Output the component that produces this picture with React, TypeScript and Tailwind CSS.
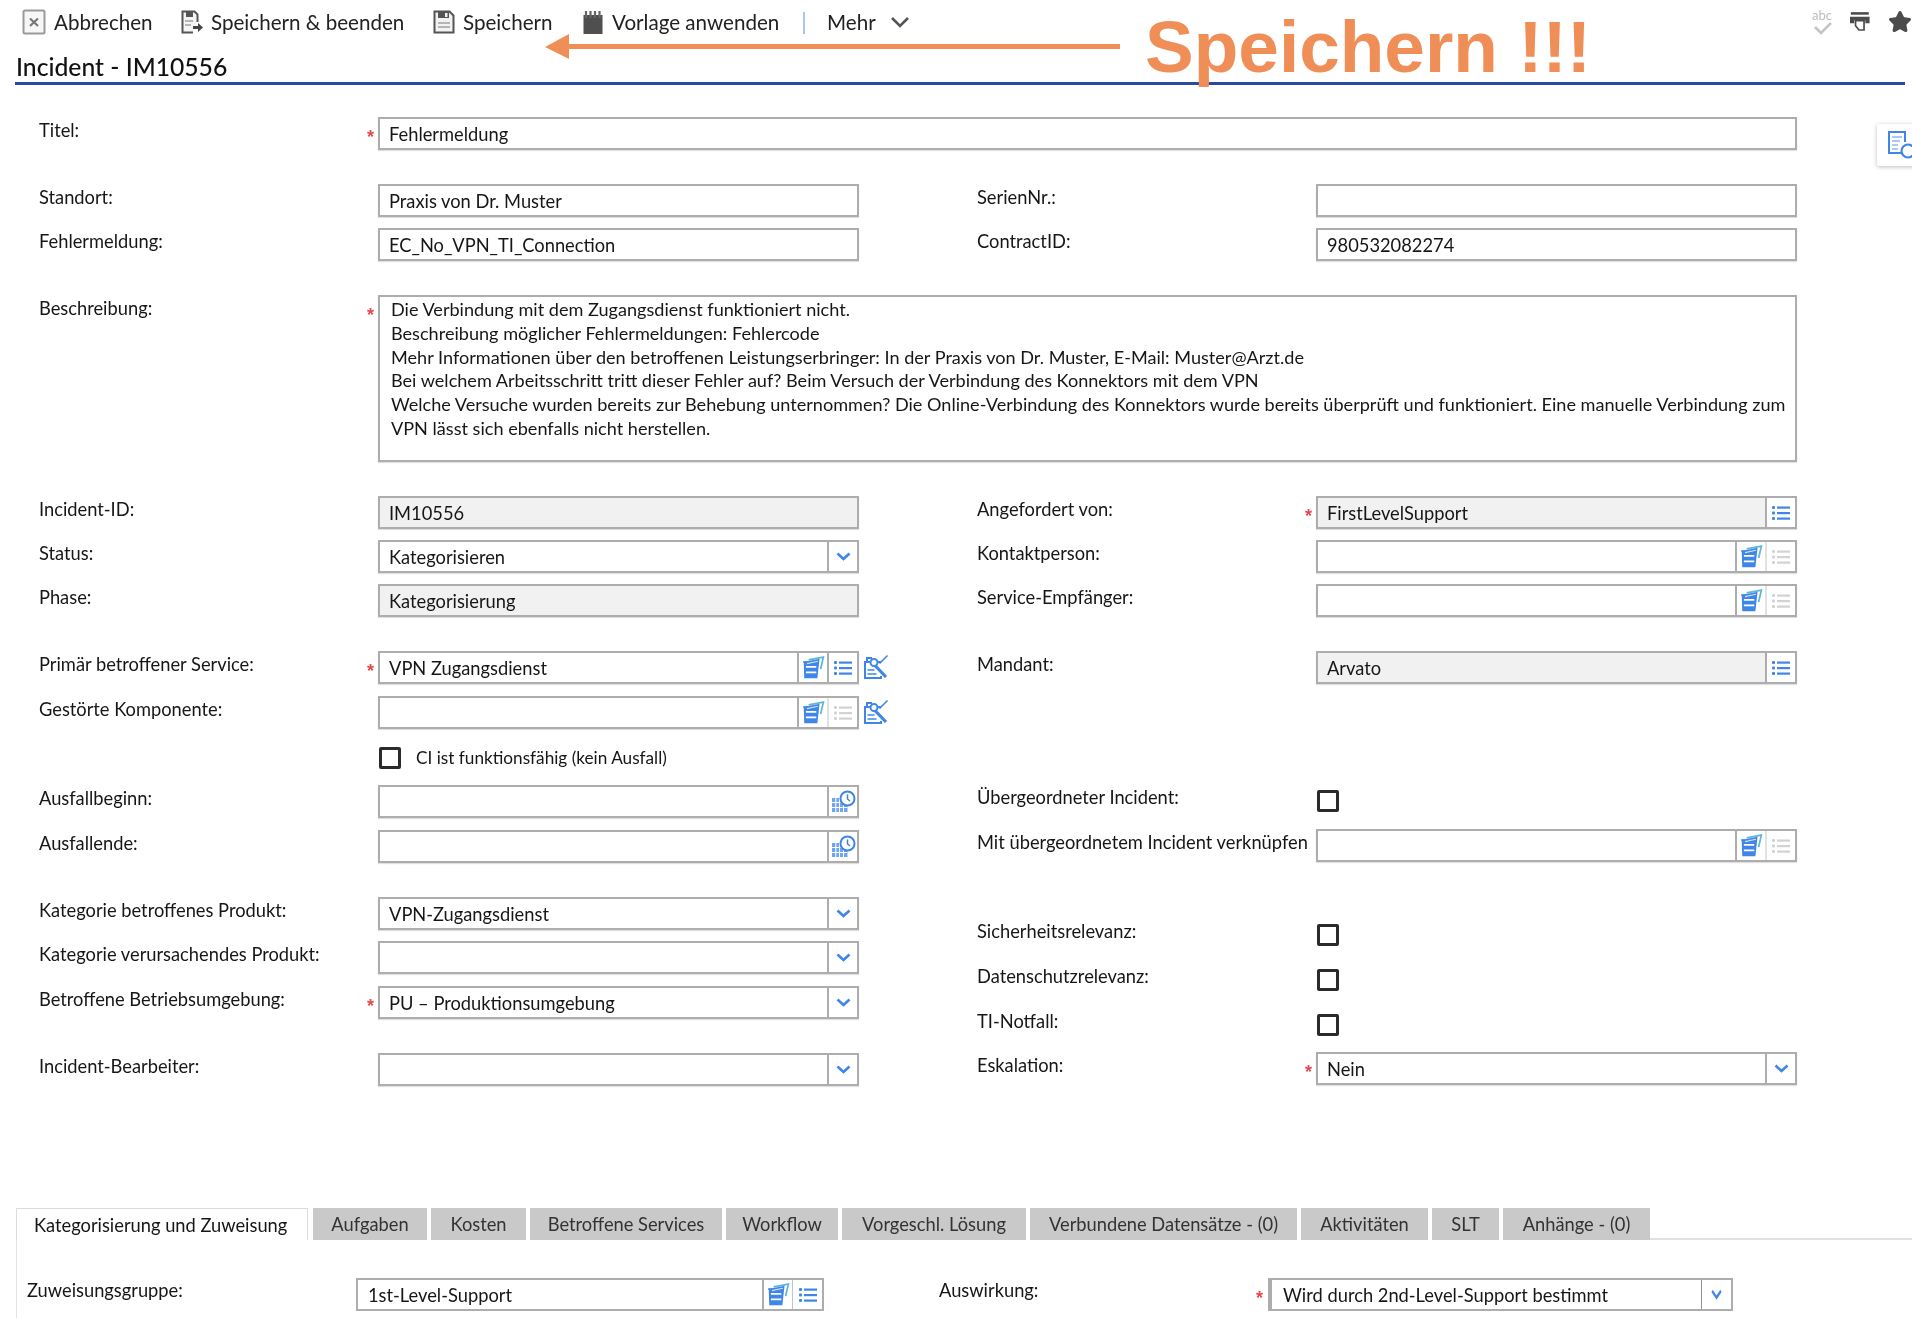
import type { ReactNode } from "react";
import { Star } from "lucide-react";

const BLUE = "#3f86e8";

function ListIcon({ muted = false }: { muted?: boolean }) {
  const c = muted ? "#d2d2d2" : BLUE;
  return (
    <svg width="18" height="16" viewBox="0 0 18 16" fill={c}>
      <rect x="0" y="1" width="3" height="3" rx="1" />
      <rect x="0" y="6.5" width="3" height="3" rx="1" />
      <rect x="0" y="12" width="3" height="3" rx="1" />
      <rect x="5" y="1.5" width="13" height="2.2" />
      <rect x="5" y="7" width="13" height="2.2" />
      <rect x="5" y="12.5" width="13" height="2.2" />
    </svg>
  );
}

function StackIcon() {
  return (
    <svg width="24" height="24" viewBox="0 0 22 22" fill="none">
      <path d="M7 3.500 20.500 1 18 12" stroke="#5fb7d8" strokeWidth="1.600" />
      <path d="M2.500 5.500 17 2.500 15 20.500H3z" fill={BLUE} />
      <path d="M2 5.500h14.500" stroke={BLUE} strokeWidth="1.500" />
      <path d="M4.500 10h9.500M4.500 15h9.500" stroke="#fff" strokeWidth="1.600" />
      <path d="M5.500 7 15.500 4.800" stroke="#cfe2fa" strokeWidth="1" />
    </svg>
  );
}

function EditIcon() {
  return (
    <svg width="26" height="26" viewBox="0 0 26 26" fill="none" stroke={BLUE} strokeWidth="2">
      <path d="M17 9.500V8H2v16h16v-2" />
      <path d="M4 8V4h5" />
      <circle cx="11" cy="8.500" r="3.500" fill="#fff" />
      <path d="M12 11.500 23 23" strokeWidth="3.200" />
      <path d="M17 9 24.500 1.500" strokeWidth="1.600" />
      <path d="M4.500 16h7M4.500 20h9" strokeWidth="1.600" />
    </svg>
  );
}

function CalClockIcon() {
  return (
    <svg width="25" height="23" viewBox="0 0 25 23" fill="none">
      <path d="M1 8h7.500v14H1zM8.500 13h8v9h-8z" fill="#6ea5ee" />
      <path d="M1 12.500h15.500M1 17.500h15.500M4.800 8v14M8.500 8v14M12.500 13v9" stroke="#fff" strokeWidth="1.100" />
      <circle cx="16.500" cy="8.500" r="7" fill="#fff" stroke={BLUE} strokeWidth="2" />
      <path d="M16.500 4.500v4.500l2.500 2" stroke="#4a7fc4" strokeWidth="1.500" />
    </svg>
  );
}

function Chevron({ small = false }: { small?: boolean }) {
  return (
    <svg width={small ? 11 : 15} height={small ? 11 : 9} viewBox="0 0 15 9" fill="none" preserveAspectRatio="none">
      <path d="M1.500 1.500 7.500 7l6-5.500" stroke={BLUE} strokeWidth="2.600" />
    </svg>
  );
}

function CancelIcon() {
  return (
    <svg width="24" height="26" viewBox="0 0 24 26" fill="none">
      <rect x="1.500" y="1.500" width="21" height="23" rx="1.500" fill="#f7f7f7" stroke="#9a9a9a" strokeWidth="2" />
      <path d="M8 9.500 16 17M16 9.500 8 17" stroke="#777" strokeWidth="2.200" />
    </svg>
  );
}

function SaveExitIcon() {
  return (
    <svg width="23" height="24" viewBox="0 0 23 24" fill="none">
      <path d="M12 22.500H1.500v-21h12l3 3V12" fill="#f4f4f4" stroke="#555" strokeWidth="2" />
      <path d="M5 2h7v5H5z" fill="#555" />
      <path d="M4 11h8M4 15h6" stroke="#b5b5b5" strokeWidth="2" />
      <path d="M12 17.500h6" stroke="#444" strokeWidth="3" />
      <path d="M17 13l5 4.500-5 4.500z" fill="#444" />
    </svg>
  );
}

function SaveIcon() {
  return (
    <svg width="22" height="24" viewBox="0 0 22 24" fill="none">
      <path d="M1.500 1.500h15l4 4v17h-19z" fill="#f2f2f2" stroke="#555" strokeWidth="2" />
      <path d="M5 2h11v6H5z" fill="#555" />
      <path d="M12 3h2.500v4H12z" fill="#f2f2f2" />
      <path d="M5 13h12M5 17h12" stroke="#b5b5b5" strokeWidth="2" />
    </svg>
  );
}

function TemplateIcon() {
  return (
    <svg width="20" height="25" viewBox="0 0 20 25" fill="none">
      <rect x="0.500" y="5" width="19" height="19" fill="#4f4f4f" />
      <path d="M3 1v7M7.500 1v7M12 1v7M16.500 1v7" stroke="#666" strokeWidth="2.200" />
    </svg>
  );
}

function SpellIcon() {
  return (
    <span className="relative block h-[26px] w-[24px]">
      <span className="absolute left-[0px] top-[-2px] text-[13px] leading-[16px] text-[#bdbdbd]">abc</span>
      <svg className="absolute left-[1px] top-[12px]" width="20" height="14" viewBox="0 0 20 14" fill="none">
        <path d="M2 6l6 6L18 2" stroke="#c4c4c4" strokeWidth="2.600" />
      </svg>
    </span>
  );
}

function PrintIcon() {
  return (
    <svg width="23" height="23" viewBox="0 0 23 23" fill="none">
      <path d="M1 0.500h21v3H1z" fill="#4c4c4c" />
      <path d="M0 6h23v7.500h-5V10H5v3.500H0z" fill="#4c4c4c" />
      <path d="M6.500 10.500h10v11h-6l-4-5z" fill="#fff" stroke="#4c4c4c" strokeWidth="2" />
    </svg>
  );
}

function PreviewIcon() {
  return (
    <svg width="30" height="30" viewBox="0 0 30 30" fill="none">
      <path d="M14 23H2V2h16v10" fill="#fff" stroke={BLUE} strokeWidth="2" />
      <path d="M5 7h10M5 11h8M5 15h6M5 19h6" stroke="#8db8f0" strokeWidth="1.600" />
      <circle cx="21" cy="21" r="6.500" fill="#fff" stroke={BLUE} strokeWidth="2.200" />
    </svg>
  );
}

function ToolbarItem({ icon, label, className }: { icon: ReactNode; label: string; className: string }) {
  return (
    <div className={`flex items-center ${className}`}>
      {icon}
      <span>{label}</span>
    </div>
  );
}

type Seg = { key: string; icon: ReactNode; light?: boolean };

function Field({
  value = "",
  disabled = false,
  segments = [],
}: {
  value?: string;
  disabled?: boolean;
  segments?: Seg[];
}) {
  return (
    <div className="flex h-[33px] w-full border-2 border-[#adadad] bg-white shadow-[0_1px_1px_rgba(0,0,0,0.12)]">
      <div className={`min-w-0 flex-1 truncate pl-[9px] leading-[30px] ${disabled ? "bg-[#f1f1f1]" : ""}`}>{value}</div>
      {segments.map((s) => (
        <div
          key={s.key}
          className={`flex w-[30px] shrink-0 items-center justify-center border-l-2 ${s.light ? "border-[#e2e2e2]" : "border-[#adadad]"}`}
        >
          {s.icon}
        </div>
      ))}
    </div>
  );
}

const drop: Seg[] = [{ key: "drop", icon: <Chevron /> }];
const listOn: Seg = { key: "list", icon: <ListIcon /> };
const listOff: Seg = { key: "list", icon: <ListIcon muted />, light: true };
const stack: Seg = { key: "stack", icon: <StackIcon /> };
const cal: Seg[] = [{ key: "cal", icon: <CalClockIcon /> }];

function Req() {
  return <span className="ml-[-2px] font-['Liberation_Sans',sans-serif] text-[18px] font-bold leading-[20px] text-[#e5484d]">*</span>;
}

function Row({
  label,
  required = false,
  className = "",
  children,
}: {
  label: string;
  required?: boolean;
  className?: string;
  children: ReactNode;
}) {
  return (
    <div className={`flex items-start ${className}`}>
      <div className="w-[330px] shrink-0 whitespace-nowrap leading-[26px]">{label}</div>
      <div className="w-[9px] shrink-0 pt-[9px] leading-[20px]">{required ? <Req /> : null}</div>
      <div className="min-w-0 flex-1">{children}</div>
    </div>
  );
}

function CheckBox() {
  return <div className="h-[22px] w-[22px] rounded-[2px] border-[3px] border-[#2b2b2b] bg-white" />;
}

function CheckCell() {
  return (
    <div className="pl-[1px] pt-[6px]">
      <CheckBox />
    </div>
  );
}

const tabs = [
  { label: "Aufgaben", w: "w-[114px]" },
  { label: "Kosten", w: "w-[95px]" },
  { label: "Betroffene Services", w: "w-[192px]" },
  { label: "Workflow", w: "w-[112px]" },
  { label: "Vorgeschl. Lösung", w: "w-[184px]" },
  { label: "Verbundene Datensätze - (0)", w: "w-[267px]" },
  { label: "Aktivitäten", w: "w-[127px]" },
  { label: "SLT", w: "w-[67px]" },
  { label: "Anhänge - (0)", w: "w-[147px]" },
];

const description = [
  "Die Verbindung mit dem Zugangsdienst funktioniert nicht.",
  "Beschreibung möglicher Fehlermeldungen: Fehlercode",
  "Mehr Informationen über den betroffenen Leistungserbringer: In der Praxis von Dr. Muster, E-Mail: Muster@Arzt.de",
  "Bei welchem Arbeitsschritt tritt dieser Fehler auf? Beim Versuch der Verbindung des Konnektors mit dem VPN",
  "Welche Versuche wurden bereits zur Behebung unternommen? Die Online-Verbindung des Konnektors wurde bereits überprüft und funktioniert. Eine manuelle Verbindung zum VPN lässt sich ebenfalls nicht herstellen.",
];

export default function App() {
  return (
    <div className="relative h-[1318px] w-[1912px] overflow-hidden bg-white font-['Lato','Open_Sans',sans-serif] text-[18.3px] text-[#161616] blur-[0.4px]">
      {/* toolbar */}
      <div className="flex h-[45px] items-center pl-[22px] text-[20.6px] text-[#222]">
        <ToolbarItem icon={<CancelIcon />} label="Abbrechen" className="w-[159px] gap-[8px]" />
        <ToolbarItem icon={<SaveExitIcon />} label="Speichern & beenden" className="w-[252px] gap-[7px]" />
        <ToolbarItem icon={<SaveIcon />} label="Speichern" className="w-[150px] gap-[8px]" />
        <ToolbarItem icon={<TemplateIcon />} label="Vorlage anwenden" className="w-[220px] gap-[9px]" />
        <div className="h-[22px] w-[2px] bg-[#a9c8ee]" />
        <div className="ml-[22px] flex items-center gap-[14px]">
          <span>Mehr</span>
          <svg width="20" height="12" viewBox="0 0 20 12" fill="none">
            <path d="M2 2l8 8 8-8" stroke="#555" strokeWidth="2.600" />
          </svg>
        </div>
        <div className="ml-auto flex w-[100px] items-center gap-[18px] pb-[2px]">
          <SpellIcon />
          <PrintIcon />
          <Star size={24} className="shrink-0 fill-[#4c4c4c] text-[#4c4c4c]" />
        </div>
      </div>

      {/* heading */}
      <div className="ml-[16px] h-[37px] text-[24.7px] font-medium leading-[44px] text-[#111]">Incident - IM10556</div>
      <div className="ml-[15px] mr-[7px] h-[3px] bg-[#2a4a9f]" />

      {/* form */}
      <div className="pl-[39px] pr-[115px]">
        <Row label="Titel:" required className="mt-[32px]">
          <Field value="Fehlermeldung" />
        </Row>

        <div className="mt-[34px] flex gap-[118px]">
          <div className="w-[820px]">
            <Row label="Standort:">
              <Field value="Praxis von Dr. Muster" />
            </Row>
            <Row label="Fehlermeldung:" className="mt-[11px]">
              <Field value="EC_No_VPN_TI_Connection" />
            </Row>
          </div>
          <div className="w-[820px]">
            <Row label="SerienNr.:">
              <Field />
            </Row>
            <Row label="ContractID:" className="mt-[11px]">
              <Field value="980532082274" />
            </Row>
          </div>
        </div>

        <Row label="Beschreibung:" required className="mt-[34px]">
          <div className="h-[167px] border-2 border-[#adadad] pl-[11px] pr-[3px] pt-[1px] text-[18.1px] leading-[23.800px] shadow-[0_1px_1px_rgba(0,0,0,0.12)]">
            {description.map((line) => (
              <div key={line}>{line}</div>
            ))}
          </div>
        </Row>

        <div className="mt-[34px] flex gap-[118px]">
          <div className="w-[820px]">
            <Row label="Incident-ID:">
              <Field value="IM10556" disabled />
            </Row>
            <Row label="Status:" className="mt-[11px]">
              <Field value="Kategorisieren" segments={drop} />
            </Row>
            <Row label="Phase:" className="mt-[11px]">
              <Field value="Kategorisierung" disabled />
            </Row>
            <div className="relative">
              <Row label="Primär betroffener Service:" required className="mt-[34px]">
                <Field value="VPN Zugangsdienst" segments={[stack, listOn]} />
              </Row>
              <div className="absolute left-[824px] top-[3px]">
                <EditIcon />
              </div>
            </div>
            <div className="relative">
              <Row label="Gestörte Komponente:" className="mt-[12px]">
                <Field segments={[stack, listOff]} />
              </Row>
              <div className="absolute left-[824px] top-[3px]">
                <EditIcon />
              </div>
            </div>
            <div className="ml-[340px] mt-[18px] flex h-[22px] items-center gap-[15px] text-[17.2px]">
              <CheckBox />
              <span>CI ist funktionsfähig (kein Ausfall)</span>
            </div>
            <Row label="Ausfallbeginn:" className="mt-[16px]">
              <Field segments={cal} />
            </Row>
            <Row label="Ausfallende:" className="mt-[12px]">
              <Field segments={cal} />
            </Row>
            <Row label="Kategorie betroffenes Produkt:" className="mt-[34px]">
              <Field value="VPN-Zugangsdienst" segments={drop} />
            </Row>
            <Row label="Kategorie verursachendes Produkt:" className="mt-[11px]">
              <Field segments={drop} />
            </Row>
            <Row label="Betroffene Betriebsumgebung:" required className="mt-[12px]">
              <Field value="PU – Produktionsumgebung" segments={drop} />
            </Row>
            <Row label="Incident-Bearbeiter:" className="mt-[34px]">
              <Field segments={drop} />
            </Row>
          </div>

          <div className="w-[820px]">
            <Row label="Angefordert von:" required>
              <Field value="FirstLevelSupport" disabled segments={[listOn]} />
            </Row>
            <Row label="Kontaktperson:" className="mt-[11px]">
              <Field segments={[stack, listOff]} />
            </Row>
            <Row label="Service-Empfänger:" className="mt-[11px]">
              <Field segments={[stack, listOff]} />
            </Row>
            <Row label="Mandant:" className="mt-[34px]">
              <Field value="Arvato" disabled segments={[listOn]} />
            </Row>
            <Row label="Übergeordneter Incident:" className="mt-[100px]">
              <CheckCell />
            </Row>
            <Row label="Mit übergeordnetem Incident verknüpfen" className="mt-[17px]">
              <Field segments={[stack, listOff]} />
            </Row>
            <Row label="Sicherheitsrelevanz:" className="mt-[56px]">
              <CheckCell />
            </Row>
            <Row label="Datenschutzrelevanz:" className="mt-[17px]">
              <CheckCell />
            </Row>
            <Row label="TI-Notfall:" className="mt-[17px]">
              <CheckCell />
            </Row>
            <Row label="Eskalation:" required className="mt-[16px]">
              <Field value="Nein" segments={drop} />
            </Row>
          </div>
        </div>
      </div>

      {/* tabs */}
      <div className="mt-[122px] flex h-[32px] pl-[16px]">
        <div className="w-[292px] border-x border-t border-[#dcdcdc] bg-white pl-[17px] leading-[32px] text-[#161616]">
          Kategorisierung und Zuweisung
        </div>
        <div className="ml-[5px] flex gap-[4px]">
          {tabs.map((t) => (
            <div key={t.label} className={`bg-[#c9c9c9] text-center leading-[32px] text-[#333] ${t.w}`}>
              {t.label}
            </div>
          ))}
        </div>
        <div className="flex-1 border-b-2 border-[#dfe3dc]" />
      </div>
      <div className="ml-[16px] flex h-[78px] items-start border-l border-[#e3e3e3] pl-[10px] pt-[38px]">
        <div className="w-[329px] leading-[25px]">Zuweisungsgruppe:</div>
        <div className="w-[468px]">
          <div className="flex h-[33px] border-2 border-[#adadad]">
            <div className="flex-1 pl-[10px] leading-[30px]">1st-Level-Support</div>
            <div className="flex w-[30px] items-center justify-center border-l-2 border-[#adadad]">
              <StackIcon />
            </div>
            <div className="flex w-[30px] items-center justify-center border-l border-[#c5c5c5]">
              <ListIcon />
            </div>
          </div>
        </div>
        <div className="ml-[115px] w-[319px] leading-[25px]">Auswirkung:</div>
        <div className="w-[10px] pt-[9px] leading-[20px]">
          <Req />
        </div>
        <div className="flex h-[33px] w-[465px] border-2 border-l-[4px] border-[#adadad]">
          <div className="flex-1 pl-[11px] leading-[30px]">Wird durch 2nd-Level-Support bestimmt</div>
          <div className="flex w-[30px] items-center justify-center border-l border-[#8f8f8f]">
            <Chevron small />
          </div>
        </div>
      </div>

      {/* annotation painted over the screenshot */}
      <svg className="absolute left-[540px] top-[30px]" width="585" height="32" viewBox="0 0 585 32" fill="none">
        <path d="M5 17 29 4v10h551v5H29v10z" fill="#f08e57" />
      </svg>
      <div className="absolute left-[1145px] top-[5px] font-['Liberation_Sans',sans-serif] text-[73px] font-bold leading-[84px] text-[#f08e57]">
        Speichern !!!
      </div>

      {/* floating side tab */}
      <div className="absolute left-[1877px] top-[124px] flex h-[42px] w-[40px] items-center rounded-l-[2px] bg-white pl-[10px] shadow-[0_1px_4px_rgba(0,0,0,0.25)]">
        <PreviewIcon />
      </div>
    </div>
  );
}
